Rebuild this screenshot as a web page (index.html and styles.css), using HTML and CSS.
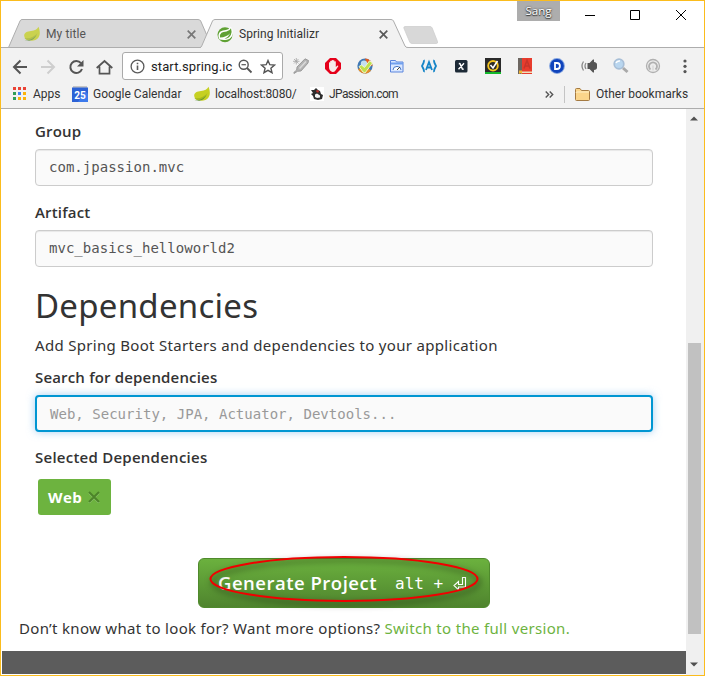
FILE: index.html
```html
<!DOCTYPE html>
<html lang="en">
<head>
<meta charset="utf-8">
<title>Spring Initializr</title>
<link rel="stylesheet" href="styles.css">
</head>
<body>
<svg class="defs" width="0" height="0">
  <symbol id="leaf" viewBox="0 0 16 16"><path d="M14.500.8c1.500 4 2 7.500 0 10.700-2 3-6 3.500-9 3-3-.3-5-2-5.300-4.500C0 6.500 3 5.500 7 5c4-.3 6-1.500 7.500-4.200z" fill="#c6d022"/><path d="M.5 12c5 1 9.500-1 13-5-1.500 4-4.500 6.500-8.500 7-2 .2-3.500-.5-4.500-2z" fill="#a5b91e"/><path d="M.5 14.500c5 0 9-1.500 12-5.500-2 5-7 6.500-12 5.500z" fill="#5b8f3c"/></symbol>
  <symbol id="cross" viewBox="0 0 9 9"><path d="M.7.7l7.600 7.600M8.300.7L.7 8.300" stroke="currentColor" stroke-width="1.700" fill="none"/></symbol>
</svg>
<div class="window">
  <header class="tabstrip">
    <div class="tab tab-idle">
      <svg class="tab-shape" width="202" height="29" viewBox="0 0 202 29"><path d="M.5 28.500L12 2Q12.700.5 14 .5H190Q192 .5 192.700 2L200.500 20V28.500z" fill="#d9d9d9" stroke="#adadad"/></svg>
      <svg class="fav faded" width="16" height="16"><use href="#leaf"/></svg>
      <span class="tab-title t-my">My title</span>
      <svg class="tab-close" width="9" height="9"><use href="#cross"/></svg>
    </div>
    <div class="tab tab-active">
      <svg class="tab-shape" width="208" height="30" viewBox="0 0 208 30"><path d="M0 30L1 28 12.500 2Q13.200.5 15 .5H191Q192.800.5 193.500 2L205 27Q205.700 28.500 208 28.500V30z" fill="#f2f2f2"/><path d="M0 28.500Q1 28.500 1.700 27L12.500 2Q13.200.5 15 .5H191Q192.800.5 193.500 2L205 27Q205.700 28.500 208 28.500" fill="none" stroke="#adadad"/></svg>
      <svg class="fav" width="17" height="17" viewBox="0 0 17 17"><circle cx="8" cy="8.700" r="7.500" fill="#5fa134"/><path d="M13.800.5Q16 3 15.800 7.500 15 12.500 10 13.800 6 14.300 2.500 13.500L1.500 11Q1 7.500 3.500 5.500 5.500 4.300 9 4 12.500 3.500 13.800.5z" fill="#fff"/><path d="M14 2.200Q15.300 6 13.800 9 12 12.500 7.500 12.700 11.500 11 13.300 7.200 9.500 11.200 3 11.500 2.300 8.500 4.500 6.700 6 5.700 9.500 5.400 12.800 4.800 14 2.200z" fill="#5fa134"/></svg>
      <span class="tab-title t-init">Spring Initializr</span>
      <svg class="tab-close dark" width="9" height="9"><use href="#cross"/></svg>
    </div>
    <svg class="newtab" width="36" height="18" viewBox="0 0 36 18"><path d="M2 .5H27Q28.500.5 29.200 2L34.500 15.500Q35 17.500 33.500 17.500H9Q7.500 17.500 6.700 16L1 2.500Q.3.5 2 .5z" fill="#d8d8d8" stroke="#cbcbcb" stroke-width=".7"/></svg>
    <div class="user">Sang</div>
    <svg class="winctl" width="102" height="14" viewBox="0 0 102 14" fill="none" stroke="#000"><path d="M0 6.500H10"/><path d="M45.500 1.500h9v9h-9z"/><path d="M91 1l10 10M101 1L91 11"/></svg>
  </header>

  <nav class="toolbar">
    <svg class="nav-icons" width="102" height="18" viewBox="0 0 102 18" fill="none" stroke="#555" stroke-width="2">
      <path d="M15 9H2.500M8.500 2.500L2 9l6.500 6.500"/>
      <path d="M29 9H41.500M35.500 2.500L42 9l-6.500 6.500" stroke="#cecece"/>
      <path d="M69 5.200A6 6 0 1 0 70 11"/><path d="M71.500 2V8.500H65z" fill="#555" stroke="none"/>
      <path d="M84.700 10L92.500 3l7.800 7M87.500 8.500V15.700H97.500V8.500" stroke-width="1.700"/>
    </svg>
    <div class="omnibox">
      <svg width="15" height="15" viewBox="0 0 15 15" fill="none" stroke="#5a5a5a"><circle cx="7.500" cy="7.500" r="6.400" stroke-width="1.300"/><path d="M7.500 6.500V11M7.500 3.800v1.500" stroke-width="1.600"/></svg>
      <span class="url">start.spring.ic</span>
      <svg class="zoomout" width="15" height="15" viewBox="0 0 15 15" fill="none" stroke="#555" stroke-width="1.400"><circle cx="5.700" cy="5.700" r="4.500"/><path d="M9 9l4.500 4.500" stroke-width="1.800"/><path d="M3.500 5.700h4.400" stroke-width="1.200"/></svg>
      <svg width="16" height="15" viewBox="0 0 16 15"><path d="M8 1.500l1.800 4.200 4.700.4-3.600 3.100 1.100 4.500L8 11.300l-4 2.400 1.100-4.500L1.500 6.100l4.700-.4z" fill="none" stroke="#555" stroke-width="1.400"/></svg>
    </div>
    <div class="extensions">
      <svg width="16" height="16" viewBox="0 0 16 16"><path d="M4 9L12 .8l3.500 1.700-.5 2.500L8 13l-3.500.3L1 15.500.8 14.500 3.700 12z" fill="#b4b4b4" stroke="#8d8d8d" stroke-width=".8"/><path d="M6.500 10.500l6.500-7" stroke="#dadada" stroke-width="1.500"/><path d="M1 1l4.500 4.500M3.300 0v6.500M0 3.300h6.500M1 5.500L5.500 1" stroke="#a4a4a4" stroke-width=".8"/></svg>
      <svg width="16" height="16" viewBox="0 0 16 16"><path d="M5 0h6l5 5v6l-5 5H5l-5-5V5z" fill="#e5001a"/><path d="M4 8V4.500q.6-.7 1.200 0V3q.8-.7 1.400 0V2.300q.8-.7 1.400 0V2.300q.8-.4 1.400.2v1q.8-.6 1.400 0V9l1.700-1.500q1 0 .8.700L10.500 12.500Q9.500 14 7.500 14 4 13 4 9z" fill="#f6eaea"/></svg>
      <svg width="16" height="16" viewBox="0 0 16 16"><circle cx="8" cy="8" r="7.600" fill="#3f78b5"/><path d="M8 .4A7.600 7.600 0 0 1 15.600 8L10 7z" fill="#e45d1f"/><path d="M1 11A7.600 7.600 0 0 0 14 12.600L8 8z" fill="#e58f2a"/><circle cx="7" cy="5.800" r="3.200" fill="#c4dff0"/><path d="M2 8.500L4.500 7 7.500 9.500l5-6.700L15.500 5 8 15 6 14z" fill="#bfe04c" stroke="#f7fbd9" stroke-width=".9"/></svg>
      <svg width="16" height="16" viewBox="0 0 16 16"><path d="M1.500 14V2.500h5l1 1.500H14v10z" fill="#d9e7ff" stroke="#5b85dd"/><path d="M2 4.500h12v2H2z" fill="#70a0ee"/><path d="M4 12a4 3.600 0 0 1 8 0" fill="#fff" stroke="#4777c6"/><path d="M8 12l3-3" stroke="#444"/></svg>
      <svg width="16" height="16" viewBox="0 0 16 16" fill="none" stroke="#1685c7" stroke-width="1.800"><path d="M3.800 2.500Q2.500 2.700 2.700 4.500L1 8l1.700 3.500q-.2 1.800 1.100 2M12.200 2.500q1.300.2 1.100 2L15 8l-1.700 3.500q.2 1.800-1.100 2M5 12l3-8 3 8M6 9.500h4"/></svg>
      <svg width="16" height="16" viewBox="0 0 16 16"><rect x="2" y="2" width="12.500" height="12.500" rx="1.500" fill="#1d2a37"/><path d="M5.800 5.500l1.200.2 2.400 5.300 1.300.2M11 5.300L5.500 11.200" stroke="#fff" stroke-width="1.400" fill="none"/></svg>
      <svg width="16" height="16" viewBox="0 0 16 16"><path d="M0 0h16v16H0z" fill="#2a2a2a"/><path d="M0 14h16v2H0z" fill="#13b92c"/><circle cx="8" cy="7.800" r="4.800" fill="none" stroke="#f5c51f" stroke-width="1.900"/><path d="M5.500 7l2.500 3 4.500-7" fill="none" stroke="#fff" stroke-width="1.600"/></svg>
      <svg width="16" height="16" viewBox="0 0 16 16"><path d="M1 0h14v16H1z" fill="#e83c2d"/><path d="M1 0h4v16H1z" fill="#6d6661"/><path d="M2 13.500h13V15H2z" fill="#eee0bc"/><path d="M7 10.500l3-8 3 8M8 8h4" fill="none" stroke="#c7352a" stroke-width="1.500"/><path d="M2 12.500h3V16l-1.500-1L2 16z" fill="#f3b634"/></svg>
      <svg width="16" height="16" viewBox="0 0 16 16"><circle cx="8" cy="8" r="7.900" fill="#7fa1df"/><circle cx="8" cy="8" r="6.900" fill="#1044bc"/><path d="M6 5H8a2.900 3 0 0 1 0 6H6z" fill="none" stroke="#fff" stroke-width="1.800"/></svg>
      <svg width="16" height="16" viewBox="0 0 16 16"><path d="M6.500 5h2l3.500-3.500h1V4q3 .5 3 2.500v3q0 2-3 2.500v2.500h-1L8.500 11H6.500z" fill="#555"/><path d="M2.500 3.500Q-.5 8 2.500 12.500M5 5Q3 8 5 11" fill="none" stroke="#888" stroke-width="1.300"/></svg>
      <svg width="16" height="16" viewBox="0 0 16 16"><circle cx="6" cy="6" r="4.800" fill="#b9d6ef" stroke="#a8bfd7" stroke-width="1.700"/><path d="M3 5q1-2.500 4-2" stroke="#fff" fill="none" stroke-width="1.500"/><path d="M10 10l4.500 4" stroke="#a9a9a9" stroke-width="3"/></svg>
      <svg width="16" height="16" viewBox="0 0 16 16"><circle cx="8" cy="8" r="6.500" fill="#ececec" stroke="#b0b0b0" stroke-width="1.300"/><path d="M5.500 11.500a4 4 0 1 1 5 0" fill="none" stroke="#b0b0b0" stroke-width="1.800"/><path d="M7 7.500h2v5H7z" fill="#dedede"/></svg>
      <svg width="16" height="16" viewBox="0 0 16 16" fill="#555"><circle cx="8" cy="3" r="1.600"/><circle cx="8" cy="8.300" r="1.600"/><circle cx="8" cy="13.600" r="1.600"/></svg>
    </div>
  </nav>

  <nav class="bookmarks">
    <svg class="b-apps" width="14" height="14" viewBox="0 0 14 14"><path d="M0 0h3v3H0zM5 0h3v3H5zM10 0h3v3h-3z" fill="#ea4335"/><path d="M0 5h3v3H0zM0 10h3v3H0z" fill="#2f9e57"/><path d="M5 5h3v3H5z" fill="#4285f4"/><path d="M10 5h3v3h-3zM5 10h3v3H5zM10 10h3v3h-3z" fill="#fbb30b"/></svg>
    <span class="t-apps">Apps</span>
    <svg class="b-cal" width="16" height="16" viewBox="0 0 16 16"><path d="M1 0h14v3H1z" fill="#c5c5c5"/><path d="M0 1.500h16V16H0z" fill="#2c62d6"/><path d="M13 5l3 3v8H6z" fill="#4385f5" opacity=".7"/><text x="8" y="12.500" class="cal-day">25</text></svg>
    <span class="t-cal">Google Calendar</span>
    <svg class="b-leaf" width="16" height="16"><use href="#leaf"/></svg>
    <span class="t-local">localhost:8080/</span>
    <svg class="b-jp" width="14" height="14" viewBox="0 0 14 14"><path d="M0 0h14v14H0z" fill="#fff"/><path d="M1 3h3l2-2 2 2 2 1 1 3 2 1-1 4-4 1-4-1-1-3-2-2 2-1z" fill="#2e2e2e"/><path d="M5 7.500l2-1 3 2v2L7 11 5 10z" fill="#f4f4f4"/><path d="M6.500 3l2.500.8-.7 2-2-.8z" fill="#c6302c"/></svg>
    <span class="t-jp">JPassion.com</span>
    <svg class="b-more" width="9" height="7" viewBox="0 0 9 7" fill="none" stroke="#555" stroke-width="1.400"><path d="M.7.5l3 3-3 3M4.700.5l3 3-3 3"/></svg>
    <span class="b-sep"></span>
    <svg class="b-folder" width="15" height="13" viewBox="0 0 15 13"><path d="M.5 11.500v-10q0-1 1-1h3.500l1.500 2h7q1 0 1 1v8q0 1-1 1h-12q-1 0-1-1z" fill="#fbd58b" stroke="#a47a42"/><path d="M1 5Q1 4 2 4H14" stroke="#fff0c9" fill="none"/></svg>
    <span class="t-other">Other bookmarks</span>
  </nav>

  <div class="viewport">
    <main class="page">
      <form class="fields">
        <label class="lab l-group">Group</label>
        <div class="field"><span>com.jpassion.mvc</span></div>
        <label class="lab l-art">Artifact</label>
        <div class="field"><span>mvc_basics_helloworld2</span></div>
        <h1><span>Dependencies</span></h1>
        <p class="hint">Add Spring Boot Starters and dependencies to your application</p>
        <label class="lab l-search">Search for dependencies</label>
        <div class="field focus"><span>Web, Security, JPA, Actuator, Devtools...</span></div>
        <label class="lab l-sel">Selected Dependencies</label>
        <div class="tag"><span>Web</span><svg width="12" height="12" viewBox="0 0 12 12"><path d="M1 2l10 10M11 2L1 12" stroke="#94c879" stroke-width="1.500"/><path d="M1 1l10 10M11 1L1 11" stroke="#4c8429" stroke-width="2"/></svg></div>
      </form>
      <div class="submit">
        <span class="gen">Generate Project</span><span class="kbd">alt +</span>
        <svg class="ret" width="14" height="15" viewBox="0 0 14 15" fill="none" stroke="#fff" stroke-width="1.100"><path d="M9.500 1.500h3v9.500H5.500v2.800L1 9.500 5.500 5.500v3h4z"/></svg>
        <svg class="ring" width="278" height="56" viewBox="0 0 278 56"><ellipse cx="138" cy="28" rx="133.500" ry="22" fill="none" stroke="#f00000" stroke-width="2"/></svg>
      </div>
      <p class="switch"><span>Don’t know what to look for? Want more options?</span> <a>Switch to the full version.</a></p>
      <footer></footer>
    </main>
    <div class="scroll"><svg width="8" height="5" viewBox="0 0 8 5"><path d="M0 4.500L4 .5l4 4z" fill="#505050"/></svg><div class="thumb"></div><svg class="down" width="8" height="5" viewBox="0 0 8 5"><path d="M0 .5l4 4 4-4z" fill="#505050"/></svg></div>
  </div>
</div>
</body>
</html>
```
FILE: styles.css
```css
* { box-sizing: border-box; }
body { margin: 0; background: #fff; font-family: Roboto, sans-serif; font-size: 12px; color: #333; }
.defs { position: absolute; }
svg { flex: none; display: block; }
span, a { white-space: nowrap; }
.window { width: 705px; height: 676px; border: 1px solid #fbbc1d; display: flex; flex-direction: column; background: #fff; overflow: hidden; }

.tabstrip { height: 47px; display: flex; align-items: flex-start; flex: none; border-bottom: 1px solid #adadad; }
.tab { position: relative; height: 28px; display: flex; align-items: center; margin-top: 18px; flex: none; }
.tab-shape { position: absolute; left: 0; top: 0; }
.tab > *:not(.tab-shape) { position: relative; top: 1px; }
.tab-idle { width: 192px; margin-left: 7px; padding-left: 16px; }
.tab-active { width: 208px; padding-left: 17px; z-index: 1; }
.faded { opacity: .75; }
.tab-title { margin-left: 6px; flex: none; line-height: 16px; }
.t-my { width: 141px; letter-spacing: .1px; color: #555; }
.t-init { width: 140px; margin-left: 5px; letter-spacing: .05px; }
.tab-close { color: #777; }
.tab-close.dark { color: #5a5a5a; }
.newtab { margin: 25px 0 0 -5px; }
.user { width: 43px; height: 20px; margin-left: 78px; background: #adadad; color: #fff; font: 11.500px/19px "Open Sans", sans-serif; text-align: center; text-shadow: 0 0 2px #333, 0 1px 1px #333; flex: none; }
.winctl { margin: 8px 0 0 25px; }

.toolbar { height: 36px; background: #f2f2f2; display: flex; align-items: center; flex: none; padding-left: 11px; }
.nav-icons { margin-top: 1px; }
.omnibox { width: 161px; height: 28px; margin-left: 8px; border: 1px solid #aaa; border-radius: 3px; background: #fff; display: flex; align-items: center; padding-left: 7px; flex: none; }
.url { width: 87px; margin-left: 6px; font-size: 13px; letter-spacing: .1px; color: #222; }
.zoomout { margin-right: 7px; }
.extensions { display: flex; gap: 16px; margin-left: 10px; }

.bookmarks { height: 25px; background: #f2f2f2; border-bottom: 1px solid #adadad; display: flex; align-items: center; flex: none; padding: 0 0 4px 12px; }
.bookmarks span { flex: none; line-height: 16px; color: #333; }
.t-apps { width: 39px; margin-left: 6px; }
.b-cal { position: relative; top: 0; }
.cal-day { font: bold 10px Roboto, sans-serif; fill: #fff; text-anchor: middle; }
.t-cal { width: 96px; margin-left: 5px; }
.b-leaf { margin-left: 5px; }
.t-local { width: 89px; margin-left: 5px; letter-spacing: -.15px; }
.b-jp { margin-left: 6px; }
.t-jp { width: 216px; margin-left: 5px; letter-spacing: -.6px; }
.bookmarks .b-sep { width: 1px; height: 17px; background: #c4c4c4; margin-left: 10px; }
.b-folder { margin-left: 10px; }
.t-other { margin-left: 6px; }

.viewport { flex: 1; display: flex; min-height: 0; padding-left: 1px; }
.page { width: 684px; flex: none; display: flex; flex-direction: column; font-family: "Noto Sans", sans-serif; font-size: 15px; letter-spacing: .32px; }
.fields { display: flex; flex-direction: column; padding: 0 33px; height: 449px; flex: none; }
.lab { font-family: "Open Sans", sans-serif; font-weight: 600; font-size: 15px; line-height: 20px; height: 20px; white-space: nowrap; letter-spacing: .17px; }
.l-group { margin-top: 12px; }
.l-art { margin-top: 16px; }
.l-search { margin-top: 12px; }
.l-sel { margin-top: 15px; letter-spacing: .25px; }
.field { width: 618px; height: 37px; margin-top: 8px; flex: none; border: 1px solid #ccc; border-radius: 4px; background: #fafafa; box-shadow: inset 0 1px 1px rgba(0,0,0,.075); padding: 0 14px; display: flex; align-items: center; font: 14px "DejaVu Sans Mono", monospace; letter-spacing: .02px; color: #555; }
.field:not(.focus) { padding-left: 13px; padding-bottom: 1px; }
.focus { border: 2px solid #0096d2; box-shadow: 0 0 8px rgba(102,175,233,.6); color: #999; padding: 0 13px; }
h1 { margin: 17px 0 0; height: 44px; font-size: 33px; line-height: 44px; font-weight: 400; letter-spacing: .27px; }
.hint { margin: 7px 0 0; height: 20px; line-height: 20px; white-space: nowrap; letter-spacing: .31px; }
.tag { width: 73px; height: 36px; margin: 12px 0 0 3px; border-radius: 3px; background: #6db33f; color: #fff; font: 700 15px "Open Sans", sans-serif; display: flex; align-items: center; padding-left: 10px; flex: none; }
.tag span { width: 40px; letter-spacing: .5px; }
.submit { position: relative; width: 292px; height: 50px; margin-left: 196px; flex: none; border: 1px solid #4f8a2c; border-radius: 6px; background: linear-gradient(#6bb13e, #4f842e); color: #fff; display: flex; align-items: center; padding-left: 19px; letter-spacing: 0; }
.gen { width: 177px; font: 600 18.500px "Open Sans", sans-serif; letter-spacing: .5px; padding-bottom: 2px; }
.kbd { width: 58px; font: 16px "DejaVu Sans Mono", monospace; }
.ring { position: absolute; left: 7px; top: -8px; filter: drop-shadow(2px 3px 3px rgba(0,0,0,.6)); }
.switch { margin: 10px 0 0 17px; height: 20px; line-height: 20px; display: flex; gap: 4px; }
.switch a { color: #6db33f; }
footer { height: 23px; margin-top: 13px; background: #5c5c5c; flex: none; }
.scroll { flex: 1; background: #f0f0f0; display: flex; flex-direction: column; align-items: center; padding: 7px 2px 0 0; }
.thumb { width: 13px; height: 291px; margin: 222px 0 28px; background: #c1c1c1; flex: none; }
```
